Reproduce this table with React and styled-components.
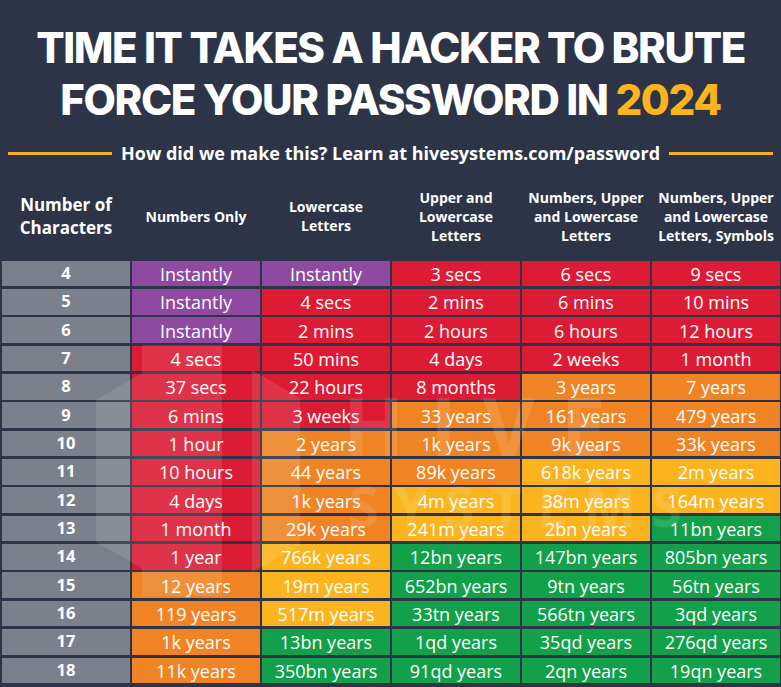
import React from 'react'
import styled, { createGlobalStyle } from 'styled-components'

const GlobalStyle = createGlobalStyle`
  html, body {
    margin: 0;
    padding: 0;
    background: #2d3447;
  }
  body {
    font-family: "Open Sans", "Liberation Sans", sans-serif;
    color: #ffffff;
  }
`

const TONES = {
  P: '#8e4aa0',
  R: '#dc1c34',
  O: '#f08424',
  Y: '#fbb41e',
  G: '#12a04a',
}

const HEADERS = [
  'Numbers Only',
  'Lowercase\nLetters',
  'Upper and\nLowercase\nLetters',
  'Numbers, Upper\nand Lowercase\nLetters',
  'Numbers, Upper\nand Lowercase\nLetters, Symbols',
]

const ROWS = [
  [4, 'PPRRR', ['Instantly', 'Instantly', '3 secs', '6 secs', '9 secs']],
  [5, 'PRRRR', ['Instantly', '4 secs', '2 mins', '6 mins', '10 mins']],
  [6, 'PRRRR', ['Instantly', '2 mins', '2 hours', '6 hours', '12 hours']],
  [7, 'RRRRR', ['4 secs', '50 mins', '4 days', '2 weeks', '1 month']],
  [8, 'RRROO', ['37 secs', '22 hours', '8 months', '3 years', '7 years']],
  [9, 'RROOO', ['6 mins', '3 weeks', '33 years', '161 years', '479 years']],
  [10, 'ROOOO', ['1 hour', '2 years', '1k years', '9k years', '33k years']],
  [11, 'ROOYY', ['10 hours', '44 years', '89k years', '618k years', '2m years']],
  [12, 'ROYYY', ['4 days', '1k years', '4m years', '38m years', '164m years']],
  [13, 'ROYYG', ['1 month', '29k years', '241m years', '2bn years', '11bn years']],
  [14, 'RYGGG', ['1 year', '766k years', '12bn years', '147bn years', '805bn years']],
  [15, 'OYGGG', ['12 years', '19m years', '652bn years', '9tn years', '56tn years']],
  [16, 'OYGGG', ['119 years', '517m years', '33tn years', '566tn years', '3qd years']],
  [17, 'OGGGG', ['1k years', '13bn years', '1qd years', '35qd years', '276qd years']],
  [18, 'OGGGG', ['11k years', '350bn years', '91qd years', '2qn years', '19qn years']],
]

const Page = styled.div`
  position: relative;
  width: 781px;
  height: 687px;
  overflow: hidden;
  background: #2d3447;
`

const Title = styled.h1`
  margin: 0;
  padding-top: 22px;
  font-family: Inter, "Open Sans", sans-serif;
  font-weight: 800;
  font-size: 42px;
  line-height: 52px;
  letter-spacing: -1.4px;
  text-align: center;
  color: #ffffff;
`

const Accent = styled.span`
  color: #fbb41e;
`

const SubRow = styled.div`
  display: flex;
  align-items: center;
  gap: 9px;
  margin-top: 15px;
  padding: 0 8px;
  height: 24px;
`

const Rule = styled.div`
  flex: 1;
  height: 3px;
  background: #f5b01f;
`

const Subtitle = styled.div`
  font-weight: 700;
  font-size: 18px;
  white-space: nowrap;
`

const Grid = styled.div`
  display: grid;
  grid-template-columns: repeat(6, 128px);
  column-gap: 2px;
  padding-left: 2px;
`

const HeadRow = styled(Grid)`
  height: 72px;
  margin-top: 15px;
  margin-bottom: 8.7px;
  align-items: center;
`

const HeadCell = styled.div`
  text-align: center;
  font-weight: 700;
  font-size: ${(p) => (p.$big ? '17px' : '14px')};
  line-height: ${(p) => (p.$big ? '23px' : '19px')};
  white-space: pre-line;
`

const Body = styled(Grid)`
  grid-auto-rows: 25.6px;
  row-gap: 2.76px;
`

const NumCell = styled.div`
  display: flex;
  align-items: center;
  justify-content: center;
  padding-bottom: 2px;
  background: #7b808a;
  font-weight: 700;
  font-size: 16.5px;
`

const Cell = styled.div`
  display: flex;
  align-items: center;
  justify-content: center;
  padding-top: 1px;
  background: ${(p) => TONES[p.$tone]};
  font-size: 18px;
  color: #ffffff;
`

const Watermark = styled.svg`
  position: absolute;
  inset: 0;
  pointer-events: none;
`

const WaterText = styled.text`
  font-family: "Open Sans", sans-serif;
  font-weight: 700;
  fill: #ffffff;
`

const HiveMark = () => (
  <Watermark width="781" height="687" viewBox="0 0 781 687">
    <g fill="#ffffff" opacity="0.1">
      <path d="M96 400 L142 373 L142 345 L222 345 L222 596 L142 596 L142 568 L96 542 Z" />
      <path d="M252 370 L300 398 L300 545 L252 572 Z" />
    </g>
    <g opacity="0.11">
      <WaterText x="343" y="456" fontSize="80" letterSpacing="26">HIVE</WaterText>
      <WaterText x="348" y="527" fontSize="56" letterSpacing="15">SYSTEMS</WaterText>
    </g>
  </Watermark>
)

export default function App() {
  return (
    <Page>
      <GlobalStyle />
      <Title>
        TIME IT TAKES A HACKER TO BRUTE
        <br />
        FORCE YOUR PASSWORD IN <Accent>2024</Accent>
      </Title>
      <SubRow>
        <Rule />
        <Subtitle>How did we make this? Learn at hivesystems.com/password</Subtitle>
        <Rule />
      </SubRow>
      <HeadRow>
        <HeadCell $big>{'Number of\nCharacters'}</HeadCell>
        {HEADERS.map((h) => (
          <HeadCell key={h}>{h}</HeadCell>
        ))}
      </HeadRow>
      <Body>
        {ROWS.map(([n, tones, values]) => (
          <React.Fragment key={n}>
            <NumCell>{n}</NumCell>
            {values.map((v, i) => (
              <Cell key={i} $tone={tones[i]}>
                {v}
              </Cell>
            ))}
          </React.Fragment>
        ))}
      </Body>
      <HiveMark />
    </Page>
  )
}
